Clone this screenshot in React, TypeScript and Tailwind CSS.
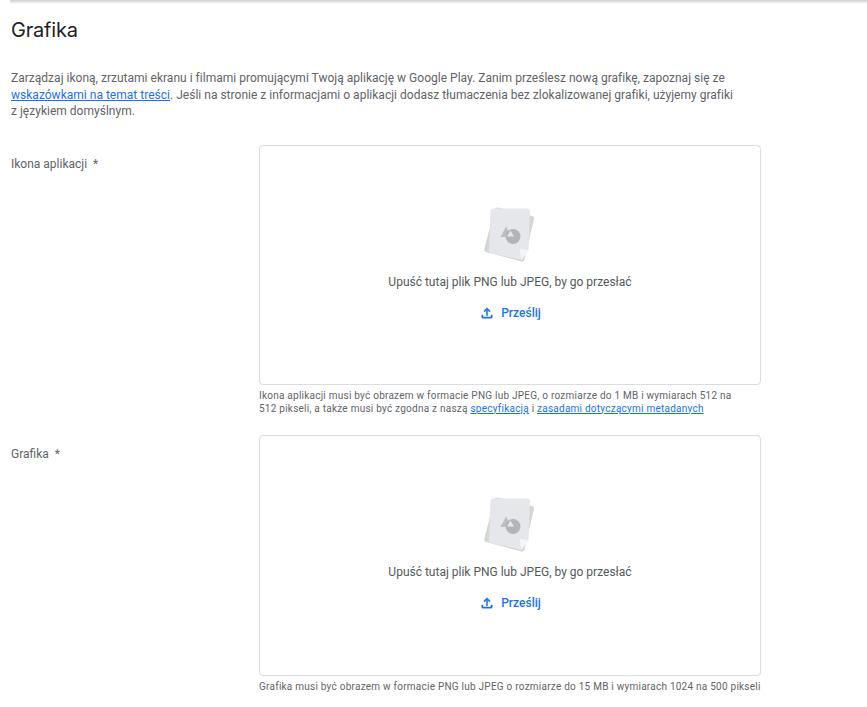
function Dropzone({ height }: { height: string }) {
  return (
    <div className={`${height} w-[502px] rounded border border-[#dadce0] flex flex-col items-center`}>
      <svg className="mt-[60px]" width="52" height="60" viewBox="0 0 52 60">
        {/* kartki */}
        <path d="M14 1.500 L48 10 Q50.500 10.700 50 13 L40.500 53.500 Q39.800 56 37.500 55.500 L2 46 Q-0.500 45.300 0.300 43 L10.500 3.500 Q11.300 0.900 14 1.500 Z" fill="#d3d5d8" />
        <path d="M9 2.500 L43 2.500 Q46 2.500 46 5.500 L44.500 44 L37.500 54 L8 47.500 Q5 46.800 5 44 L6.500 5 Q6.500 2.500 9 2.500 Z" fill="#e6e7ea" />
        <path d="M44.500 44 L35.500 43 L37.500 54 Z" fill="#f4f5f6" />
        {/* trojkat i kolo */}
        <path d="M16.500 31 L22 20.500 L27.500 31 Z" fill="#bcbec2" />
        <circle cx="29" cy="30.500" r="7.500" fill="#b2b4b9" />
        <path d="M23 30.500 L26.500 24.500 L30 30.500 Z" fill="#e6e7ea" />
      </svg>
      <p className="mt-[8px] text-[12px] leading-[16px] text-[#54585d]">Upuść tutaj plik PNG lub JPEG, by go przesłać</p>
      <button className="mt-[5.500px] h-9 flex items-center gap-[6px] text-[12px] font-medium text-[#1a73e8]">
        <svg width="16" height="16" viewBox="0 0 24 24" fill="currentColor" stroke="currentColor" strokeWidth="0.6">
          <path d="M18 15v3H6v-3H4v3c0 1.100.9 2 2 2h12c1.100 0 2-.9 2-2v-3h-2zM7 9l1.410 1.410L11 7.830V16h2V7.830l2.590 2.580L17 9l-5-5-5 5z" />
        </svg>
        Prześlij
      </button>
    </div>
  );
}

export default function App() {
  return (
    <div className="w-[867px] h-[707px] overflow-hidden bg-white font-['Roboto',sans-serif]">
      <div className="ml-[10px] h-[4px] bg-gradient-to-b from-[#cfcfcf] to-white" />
      <div className="pl-[11px]">
        <h1 className="mt-[14px] text-[20px] leading-[24px] text-[#202124] font-['Inter',sans-serif] tracking-[-0.2px]">Grafika</h1>
        <p className="mt-[28px] w-[725px] text-[12px] leading-[16.500px] text-[#5f6368] tracking-[0.015px]">
          Zarządzaj ikoną, zrzutami ekranu i filmami promującymi Twoją aplikację w Google Play. Zanim prześlesz nową grafikę, zapoznaj się ze{' '}
          <a className="text-[#1a73e8] underline">wskazówkami na temat treści</a>. Jeśli na stronie z informacjami o aplikacji dodasz tłumaczenia bez zlokalizowanej grafiki, użyjemy grafiki z językiem domyślnym.
        </p>

        <div className="mt-[25px] flex">
          <div className="w-[248px] pt-[11px] text-[12px] leading-[16px] text-[#5f6368]">Ikona aplikacji&nbsp; *</div>
          <div>
            <Dropzone height="h-[240px]" />
            <p className="mt-[4px] w-[480px] text-[10px] leading-[13px] text-[#5f6368] tracking-[0.24px]">
              Ikona aplikacji musi być obrazem w formacie PNG lub JPEG, o rozmiarze do 1 MB i wymiarach 512 na 512 pikseli, a także musi być zgodna z naszą{' '}
              <a className="text-[#1a73e8] underline">specyfikacją</a> i <a className="text-[#1a73e8] underline">zasadami dotyczącymi metadanych</a>
            </p>
          </div>
        </div>

        <div className="mt-[20px] flex">
          <div className="w-[248px] pt-[11px] text-[12px] leading-[16px] text-[#5f6368]">Grafika&nbsp; *</div>
          <div>
            <Dropzone height="h-[241px]" />
            <p className="mt-[4px] text-[10px] leading-[13px] text-[#5f6368] tracking-[0.24px]">
              Grafika musi być obrazem w formacie PNG lub JPEG o rozmiarze do 15 MB i wymiarach 1024 na 500 pikseli
            </p>
          </div>
        </div>
      </div>
    </div>
  );
}
